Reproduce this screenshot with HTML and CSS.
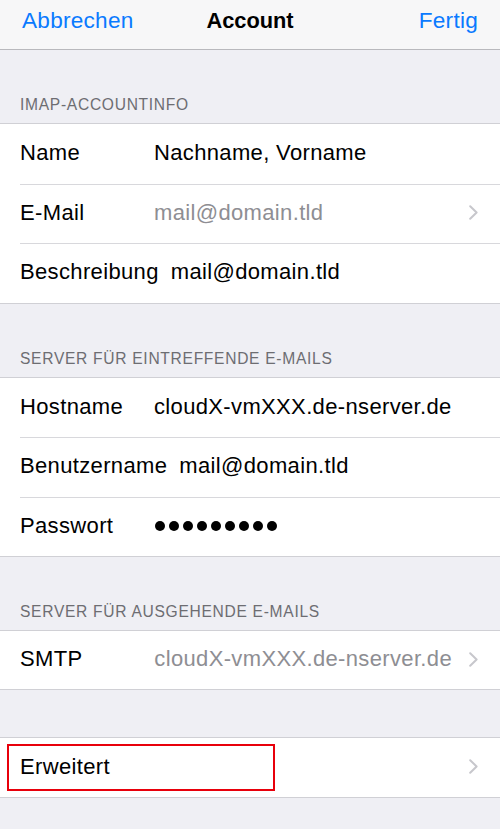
FILE: index.html
```html
<!DOCTYPE html>
<html lang="de">
<head>
<meta charset="utf-8">
<title>Account</title>
<link rel="stylesheet" href="styles.css">
</head>
<body>
  <header class="nav">
    <span class="nav-btn">Abbrechen</span>
    <span class="nav-title">Account</span>
    <span class="nav-btn">Fertig</span>
  </header>

  <main class="settings">
    <h2 class="section-title">IMAP-ACCOUNTINFO</h2>
    <ul class="group">
      <li class="row">
        <span class="label">Name</span>
        <span class="value">Nachname, Vorname</span>
      </li>
      <li class="row">
        <span class="label">E-Mail</span>
        <span class="value muted">mail@domain.tld</span>
        <svg class="chevron" viewBox="0 0 9 15" aria-hidden="true"><path d="M1.2 1.2 7.6 7.5 1.2 13.8"/></svg>
      </li>
      <li class="row">
        <span class="label">Beschreibung</span>
        <span class="value">mail@domain.tld</span>
      </li>
    </ul>

    <h2 class="section-title">SERVER FÜR EINTREFFENDE E-MAILS</h2>
    <ul class="group">
      <li class="row">
        <span class="label">Hostname</span>
        <span class="value">cloudX-vmXXX.de-nserver.de</span>
      </li>
      <li class="row">
        <span class="label">Benutzername</span>
        <span class="value">mail@domain.tld</span>
      </li>
      <li class="row">
        <span class="label">Passwort</span>
        <span class="value secret" aria-label="Passwort verborgen">
          <i></i><i></i><i></i><i></i><i></i><i></i><i></i><i></i><i></i>
        </span>
      </li>
    </ul>

    <h2 class="section-title">SERVER FÜR AUSGEHENDE E-MAILS</h2>
    <ul class="group">
      <li class="row short">
        <span class="label">SMTP</span>
        <span class="value muted end">cloudX-vmXXX.de-nserver.de</span>
        <svg class="chevron" viewBox="0 0 9 15" aria-hidden="true"><path d="M1.2 1.2 7.6 7.5 1.2 13.8"/></svg>
      </li>
    </ul>

    <div class="spacer"></div>
    <ul class="group">
      <li class="row">
        <span class="label">Erweitert</span>
        <span class="value"></span>
        <svg class="chevron" viewBox="0 0 9 15" aria-hidden="true"><path d="M1.2 1.2 7.6 7.5 1.2 13.8"/></svg>
        <span class="highlight"></span>
      </li>
    </ul>
  </main>
</body>
</html>
```

FILE: styles.css
```css
* {
  box-sizing: border-box;
}

html, body {
  margin: 0;
  padding: 0;
}

body {
  background: #efeff4;
  font-family: "Liberation Sans", Arial, sans-serif;
  color: #000;
  width: 500px;
  min-height: 829px;
}

/* navigation bar */
.nav {
  height: 50px;
  display: flex;
  align-items: center;
  justify-content: space-between;
  padding: 0 22px 8px 22px;
  background: #f7f7f8;
  border-bottom: 1px solid #b9b9bd;
  position: relative;
}

.nav-btn {
  color: #0a7aff;
  font-size: 22.6px;
  letter-spacing: 0.25px;
}

.nav-title {
  position: absolute;
  left: 0;
  right: 0;
  top: 0;
  bottom: 8px;
  display: flex;
  align-items: center;
  justify-content: center;
  font-size: 21.8px;
  font-weight: bold;
  pointer-events: none;
}

/* grouped table */
.settings {
  display: flex;
  flex-direction: column;
}

.section-title {
  margin: 0;
  padding: 45px 20px 8px;
  line-height: 20px;
  font-size: 15.6px;
  font-weight: normal;
  letter-spacing: 0.7px;
  color: #6d6d72;
}

.group {
  list-style: none;
  margin: 0;
  padding: 0;
  background: #fff;
  border-top: 1px solid #d0d0d5;
  border-bottom: 1px solid #d0d0d5;
}

.row {
  position: relative;
  height: 59.5px;
  display: flex;
  align-items: center;
  padding: 0 22px 1px 20px;
  font-size: 22px;
  letter-spacing: 0.35px;
}

.row.short {
  height: 57.5px;
}

/* separator inset from the left edge */
.row + .row::before {
  content: "";
  position: absolute;
  top: 0;
  left: 20px;
  right: 0;
  height: 1px;
  background: #d8d8dc;
}

.label {
  flex: none;
  min-width: 122px;
  margin-right: 12px;
  white-space: nowrap;
}

.value {
  flex: 1;
  white-space: nowrap;
}

.value.muted {
  color: #8e8e93;
}

.value.end {
  text-align: right;
  margin-right: 17px;
}

.chevron {
  flex: none;
  width: 9px;
  height: 15px;
  fill: none;
  stroke: #c7c7cc;
  stroke-width: 2;
  stroke-linecap: round;
  stroke-linejoin: round;
}

/* masked password */
.secret {
  display: flex;
  gap: 3.6px;
  padding-left: 1px;
}
.secret i {
  width: 10.4px;
  height: 10.4px;
  border-radius: 50%;
  background: #000;
}

.spacer {
  height: 47px;
}

.group:last-child {
  margin-bottom: 32px;
}

/* red marker around the advanced settings entry */
.highlight {
  position: absolute;
  left: 7px;
  top: 6px;
  width: 268px;
  height: 47px;
  border: 2.5px solid #e8000b;
  pointer-events: none;
}
```
